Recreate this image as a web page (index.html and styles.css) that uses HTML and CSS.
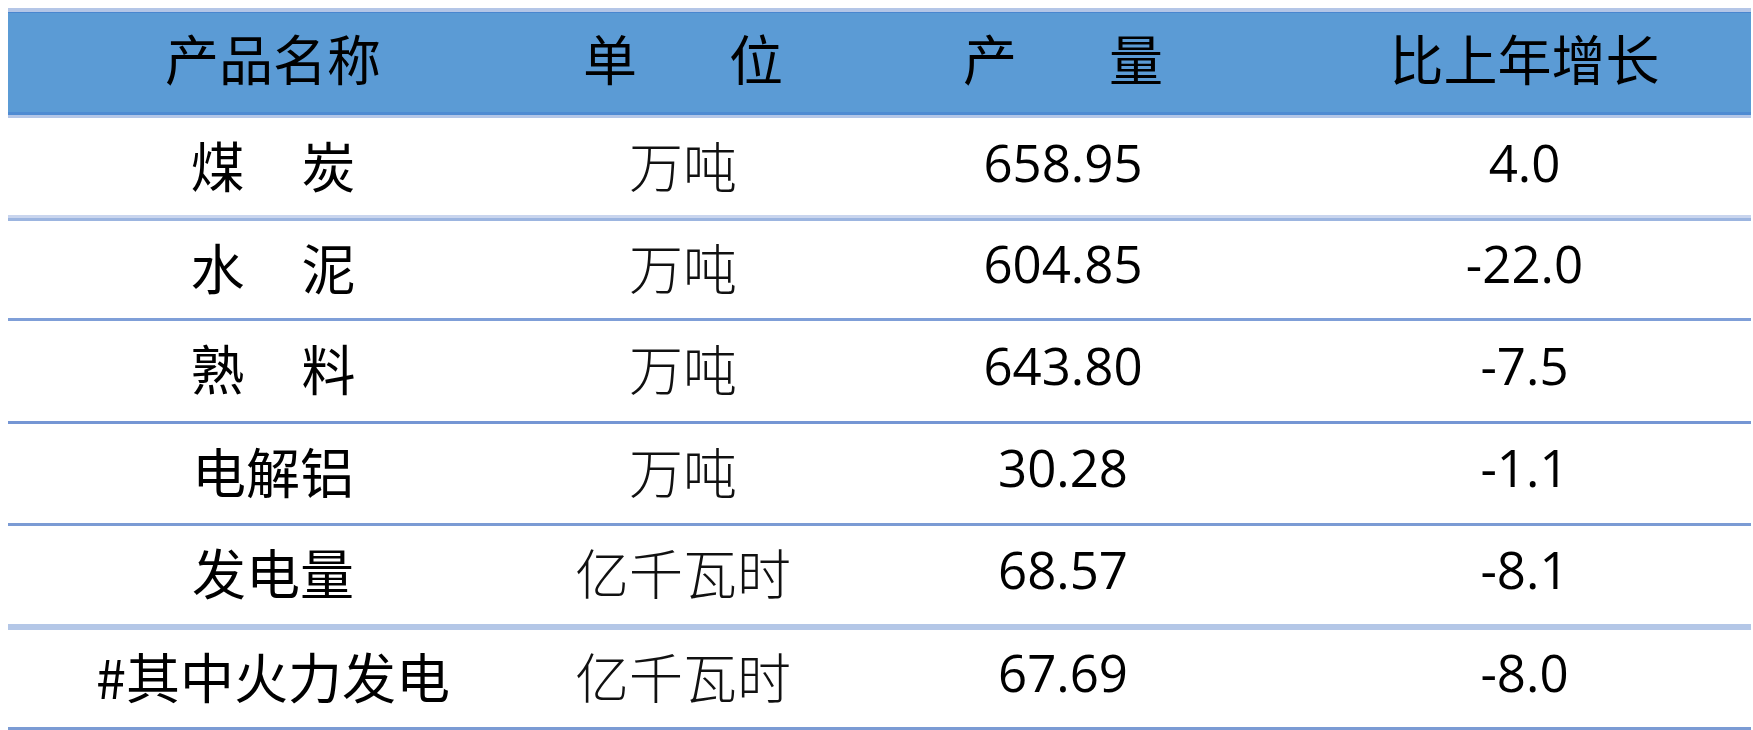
FILE: index.html
```html
<!DOCTYPE html>
<html lang="zh-CN">
<head>
<meta charset="utf-8">
<title>主要工业产品产量</title>
<link rel="stylesheet" href="styles.css">
</head>
<body>
<div class="wrap">
  <div class="table">
    <div class="row head">
      <div class="cell">产品名称</div>
      <div class="cell wide">单 位</div>
      <div class="cell wide">产 量</div>
      <div class="cell">比上年增长</div>
    </div>
    <div class="row r1">
      <div class="cell name mid">煤 炭</div>
      <div class="cell unit">万吨</div>
      <div class="cell num">658.95</div>
      <div class="cell num">4.0</div>
    </div>
    <div class="row r2">
      <div class="cell name mid">水 泥</div>
      <div class="cell unit">万吨</div>
      <div class="cell num">604.85</div>
      <div class="cell num">-22.0</div>
    </div>
    <div class="row r3">
      <div class="cell name mid">熟 料</div>
      <div class="cell unit">万吨</div>
      <div class="cell num">643.80</div>
      <div class="cell num">-7.5</div>
    </div>
    <div class="row r4">
      <div class="cell name">电解铝</div>
      <div class="cell unit">万吨</div>
      <div class="cell num">30.28</div>
      <div class="cell num">-1.1</div>
    </div>
    <div class="row r5">
      <div class="cell name">发电量</div>
      <div class="cell unit">亿千瓦时</div>
      <div class="cell num">68.57</div>
      <div class="cell num">-8.1</div>
    </div>
    <div class="row r6">
      <div class="cell name">#其中火力发电</div>
      <div class="cell unit">亿千瓦时</div>
      <div class="cell num">67.69</div>
      <div class="cell num">-8.0</div>
    </div>
  </div>
</div>
</body>
</html>
```
FILE: styles.css
```css
html, body {
  margin: 0;
  padding: 0;
  background: #ffffff;
}
.wrap {
  padding: 8px 2px 0 8px;
}
.table {
  display: flex;
  flex-direction: column;
  font-family: "Noto Sans CJK SC", "Noto Sans", sans-serif;
  color: #000;
}
.row {
  display: grid;
  grid-template-columns: 530px 290px 470px 1fr;
  align-items: center;
  box-sizing: border-box;
}
.cell {
  text-align: center;
  font-size: 54px;
  line-height: 1;
  white-space: pre;
  padding-bottom: 6px;
}
.head {
  height: 110px;
  background: #5b9bd5;
  border-top: 4px solid #b4c6e7;
  border-bottom: 3px solid #b4c6e7;
  box-shadow: inset 0 1px 0 #4a86cf, inset 0 -3px 0 #4f8bd2;
}
.head .cell {
  font-weight: 400;
  padding-bottom: 12px;
}
.wide {
  word-spacing: 80px;
}
.name {
  font-weight: 400;
}
.mid {
  word-spacing: 45px;
}
.unit {
  font-weight: 300;
  color: #111;
}
.num {
  font-family: "Open Sans", "Noto Sans", sans-serif;
  font-size: 51px;
  padding-bottom: 12px;
}
.r1 {
  height: 103px;
  border-bottom: 3px solid #9cb5e0;
  box-shadow: inset 0 -3px 0 #c9d5ee;
}
.r2 {
  height: 100px;
  border-bottom: 3px solid #7f9fd8;
}
.r3 {
  height: 103px;
  border-bottom: 3px solid #7596d4;
}
.r4 {
  height: 102px;
  border-bottom: 3px solid #7b9bd4;
}
.r5 {
  height: 104px;
  border-bottom: 6px solid #b4c7e7;
}
.r6 {
  height: 100px;
  border-bottom: 3px solid #7b9bd4;
}
```
